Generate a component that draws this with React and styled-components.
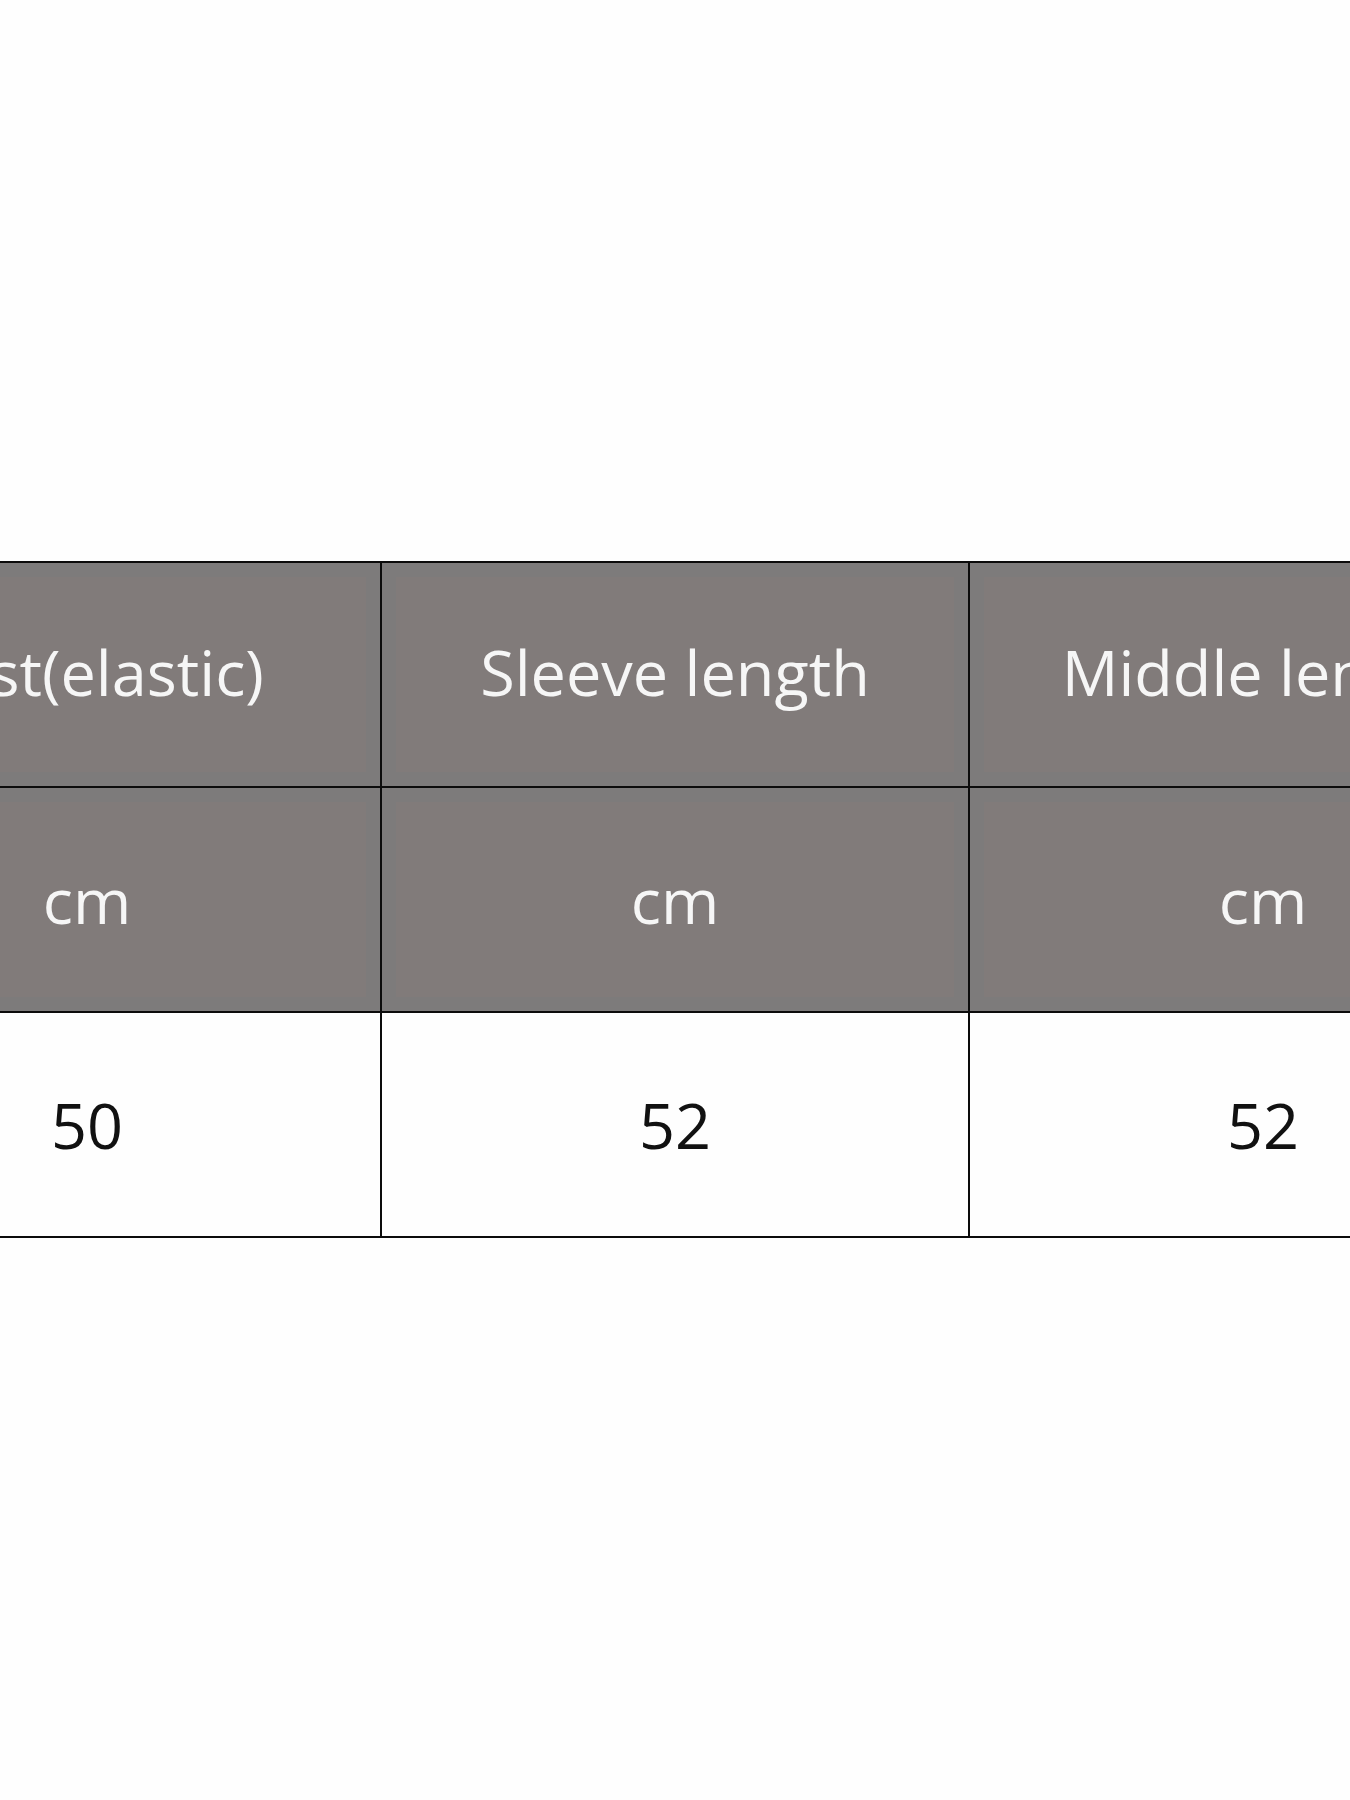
import React from "react";
import styled, { createGlobalStyle } from "styled-components";

const rows = [
    { kind: "head", cells: ["Bust(elastic)", "Sleeve length", "Middle length"] },
    { kind: "unit", cells: ["cm", "cm", "cm"] },
    { kind: "value", cells: ["50", "52", "52"] },
];

function App() {
    return (
        <>
            <GlobalStyle />
            <Page>
                <SizeTable>
                    {rows.map((row) =>
                        row.cells.map((text, i) => (
                            <Cell key={row.kind + i} $kind={row.kind}>
                                {text}
                            </Cell>
                        ))
                    )}
                </SizeTable>
            </Page>
        </>
    );
}

const GlobalStyle = createGlobalStyle`
    html, body {
        margin: 0;
        padding: 0;
        background: #fefefe;
    }
    body {
        font-family: "Open Sans", "Noto Sans", sans-serif;
    }
`;

const Page = styled.div`
    width: 1350px;
    height: 1800px;
    overflow: hidden;
    padding-top: 561px;
    box-sizing: border-box;
`;

const SizeTable = styled.div`
    display: grid;
    grid-template-columns: repeat(3, 588px);
    grid-auto-rows: 225px;
    margin-left: -208px;
    border-top: 2px solid #0c0c0c;
    border-left: 2px solid #0c0c0c;
    width: max-content;
`;

const Cell = styled.div`
    display: flex;
    align-items: center;
    justify-content: center;
    box-sizing: border-box;
    border-right: 2px solid #0c0c0c;
    border-bottom: 2px solid #0c0c0c;
    background: ${(p) => (p.$kind === "value" ? "#fefefe" : "#817b7a")};
    box-shadow: ${(p) => (p.$kind === "value" ? "none" : "inset 0 0 0 14px #7d7b7b")};
    color: ${(p) => (p.$kind === "value" ? "#111111" : "#f6f6f6")};
    font-size: 63px;
    font-weight: 400;
    white-space: nowrap;
    padding-bottom: ${(p) => (p.$kind === "head" ? "6px" : "0")};
`;

export default App;
